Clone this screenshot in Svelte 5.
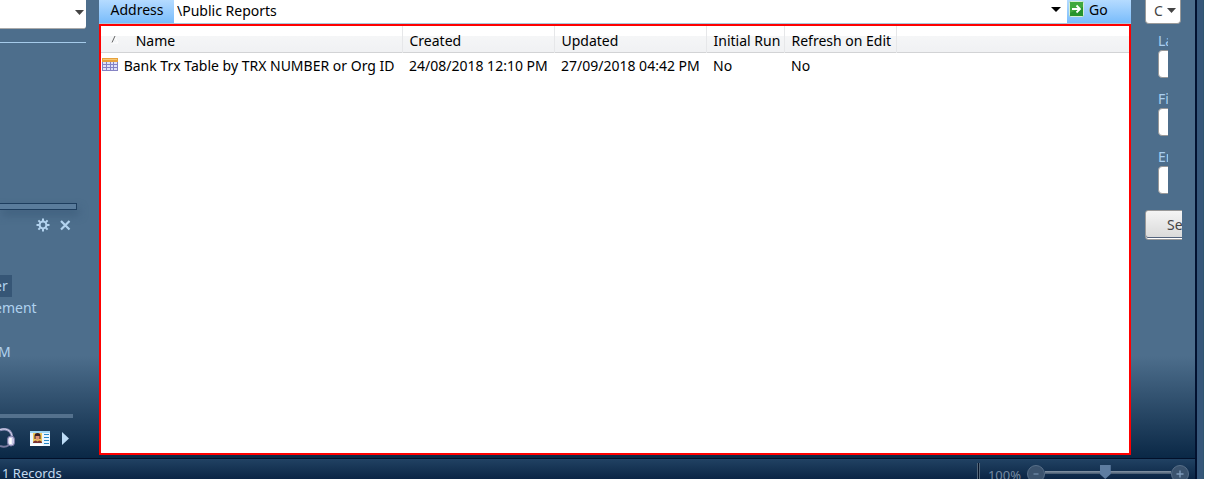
<script>
  const reports = [
    {
      name: 'Bank Trx Table by TRX NUMBER or Org ID',
      created: '24/08/2018 12:10 PM',
      updated: '27/09/2018 04:42 PM',
      initialRun: 'No',
      refreshOnEdit: 'No'
    }
  ];
  const fields = [
    { id: 'last', label: 'La' },
    { id: 'first', label: 'Fi' },
    { id: 'email', label: 'En' }
  ];
  let zoom = $state(100);
</script>

<div class="window">
  <div class="workspace">
    <aside class="nav">
      <div class="picker">
        <select aria-label="View"><option></option></select>
        <svg class="arrow" width="10" height="6" viewBox="0 0 10 6"><path d="M0 0h9L4.500 5z" fill="#444" /></svg>
      </div>
      <div class="rule"></div>
      <div class="splitter"></div>
      <div class="tools">
        <button aria-label="Settings">
          <svg width="14" height="14" viewBox="0 0 14 14" fill="none" stroke="#b3d3ef">
            <circle cx="7" cy="7" r="3.400" stroke-width="2" />
            <path d="M7 .5v2.500M7 11v2.500M.5 7H3M11 7h2.500M2.400 2.400l1.800 1.800M9.800 9.800l1.800 1.800M11.600 2.400L9.800 4.200M4.200 9.800l-1.800 1.800" stroke-width="2" />
          </svg>
        </button>
        <button aria-label="Close">
          <svg width="11" height="11" viewBox="0 0 11 11"><path d="M1 1l8.500 8.500M9.500 1L1 9.500" stroke="#b3d3ef" stroke-width="2.200" /></svg>
        </button>
      </div>
      <nav class="links">
        <a class="current" href="#er">er</a>
        <a href="#ement">ement</a>
        <a class="apart" href="#m">M</a>
      </nav>
      <div class="bar"></div>
      <div class="shortcuts">
        <button aria-label="Support">
          <svg width="15" height="20" viewBox="0 0 15 20" fill="none">
            <path d="M0 2C9-1 13 5 12 12" stroke="#8d90b8" stroke-width="2.500" />
            <path d="M0 1.500C8-.5 12 4 12 9" stroke="#d4d3ea" />
            <rect x="7.500" y="8" width="7" height="10" rx="3.500" fill="#c9c8e6" stroke="#7775a0" />
            <path d="M10.500 10v6" stroke="#fff" stroke-width="2.500" />
            <path d="M9 17q-4 3-9 1" stroke="#77799e" stroke-width="2" />
          </svg>
        </button>
        <button aria-label="Contacts">
          <svg width="20" height="15" viewBox="0 0 20 15">
            <rect width="20" height="15" fill="#e9f6ff" />
            <path d="M0 0h20v2H0z" fill="#9ed6f5" />
            <path d="M3 2h9v10H3z" fill="#efc85c" />
            <path d="M4.500 5q0-3 3-3t3 3v3h-6z" fill="#3c1f24" />
            <path d="M5.500 5h4v2.500l-2 2-2-2z" fill="#dd9176" />
            <path d="M3 12q0-2.500 3-2.500l1.500 1L9 9.500q3 0 3 2.500z" fill="#7d3434" />
            <path d="M14 3.500h5M14 6.500h5M14 9.500h5M14 12.500h5" stroke="#2688c6" />
            <path d="M0 13h13v2H0z" fill="#fff" />
          </svg>
        </button>
        <button aria-label="More">
          <svg width="7" height="13" viewBox="0 0 7 13"><path d="M0 0l7 6.500L0 13z" fill="#bddcf6" /></svg>
        </button>
      </div>
    </aside>

    <main>
      <div class="address">
        <label for="address">Address</label>
        <div class="path">
          <select id="address"><option>\Public Reports</option></select>
          <svg class="arrow" width="10" height="6" viewBox="0 0 10 6"><path d="M0 0h10L5 5z" fill="#000" /></svg>
        </div>
        <button class="go">
          <svg width="15" height="16" viewBox="0 0 15 16">
            <rect x=".5" y=".5" width="14" height="15" rx="1" fill="#26942c" stroke="#d4eed3" />
            <path d="M1 1h13v5L1 12z" fill="#50b54b" opacity=".6" />
            <path d="M3 8h8M7.500 4.500L11 8l-3.500 3.500" fill="none" stroke="#fff" stroke-width="1.800" />
          </svg>
          <span>Go</span>
        </button>
      </div>
      <div class="list">
        <table>
          <colgroup>
            <col class="c-name" /><col class="c-date" /><col class="c-date" /><col class="c-run" /><col class="c-edit" /><col />
          </colgroup>
          <thead>
            <tr>
              <th class="name">
                <svg width="10" height="9" viewBox="0 0 10 9"><path d="M4.500 1L8 8H1" fill="none" stroke="#fff" /><path d="M2 7.500L5 1" stroke="#666" /></svg>
                <span>Name</span>
              </th>
              <th>Created</th>
              <th>Updated</th>
              <th>Initial Run</th>
              <th>Refresh on Edit</th>
              <td></td>
            </tr>
          </thead>
          <tbody>
            {#each reports as r}
              <tr>
                <td class="name">
                  <svg width="16" height="14" viewBox="0 0 16 14">
                    <rect width="16" height="13" fill="#8583c4" />
                    <path d="M0 0h16v4H0z" fill="#e7a13b" />
                    <path d="M1 1h14v1H1z" fill="#f5c774" />
                    <path d="M1 4h3v2H1zM5 4h3v2H5zM9 4h2v2H9zM12 4h3v2h-3zM1 7h3v2H1zM5 7h3v2H5zM9 7h2v2H9zM12 7h3v2h-3zM1 10h3v2H1zM5 10h3v2H5zM9 10h2v2H9zM12 10h3v2h-3z" fill="#dfe1fa" />
                  </svg>
                  <span>{r.name}</span>
                </td>
                <td>{r.created}</td>
                <td>{r.updated}</td>
                <td>{r.initialRun}</td>
                <td>{r.refreshOnEdit}</td>
                <td></td>
              </tr>
            {/each}
          </tbody>
        </table>
      </div>
    </main>

    <aside class="search">
      <div class="kind">
        <select aria-label="Record type"><option>C</option></select>
        <svg class="arrow" width="10" height="6" viewBox="0 0 10 6"><path d="M0 0h9L4.500 5z" fill="#444" /></svg>
      </div>
      <form>
        {#each fields as f}
          <div class="field">
            <label for={f.id}>{f.label}</label>
            <input id={f.id} type="text" />
          </div>
        {/each}
        <button type="button">Se</button>
      </form>
    </aside>
  </div>

  <footer>
    <span>1 Records</span>
    <div class="zoom">
      <i class="grip"></i>
      <label for="zoom">{zoom}%</label>
      <button aria-label="Zoom out" onclick={() => (zoom = Math.max(0, zoom - 10))}>
        <svg width="18" height="18" viewBox="0 0 18 18"><circle cx="9" cy="9" r="8.500" fill="#3b536e" stroke="#586f88" /><path d="M6.500 9h5" stroke="#7f9bb9" /></svg>
      </button>
      <input id="zoom" type="range" min="0" max="210" bind:value={zoom} />
      <button aria-label="Zoom in" onclick={() => (zoom = Math.min(210, zoom + 10))}>
        <svg width="18" height="18" viewBox="0 0 18 18"><circle cx="9" cy="9" r="8.500" fill="#3b536e" stroke="#586f88" /><path d="M5.500 9h7M9 5.500v7" stroke="#7f9bb9" stroke-width="1.400" /></svg>
      </button>
    </div>
  </footer>
</div>

<style>
  :global(body) {
    background: #fff;
    font: 14px/22px 'Noto Sans', 'Open Sans', sans-serif;
    overflow: hidden;
  }
  * {
    box-sizing: border-box;
  }
  button,
  select,
  input {
    font: inherit;
    margin: 0;
    padding: 0;
    border: 0;
    background: none;
  }
  select {
    appearance: none;
    width: 100%;
    height: 100%;
  }
  svg {
    display: block;
    flex: none;
  }
  .window {
    display: flex;
    flex-direction: column;
    height: 100vh;
    margin-right: 26px;
    border-right: 1px solid #2f5670;
    box-shadow: inset -9px 0 #36577a;
    padding-right: 6px;
  }
  .workspace {
    display: flex;
    flex: 1;
    min-height: 0;
    border-right: 2px solid #02112f;
    background: linear-gradient(#4d6e8c 0, #4d6e8c calc(100% - 102px), #0a2846 100%);
  }
  .picker,
  .path,
  .kind {
    position: relative;
    background: #fff;
  }
  .arrow {
    position: absolute;
    pointer-events: none;
  }
  .nav {
    display: flex;
    flex-direction: column;
    flex: none;
    width: 99px;
    overflow: hidden;
  }
  .picker {
    width: 86px;
    height: 29px;
    border-radius: 0 0 3px 0;
    border-bottom: 1px solid #aaa;
  }
  .picker .arrow {
    right: 1px;
    top: 10px;
  }
  .rule {
    width: 86px;
    height: 1px;
    margin-top: 13px;
    background: #a6cbea;
  }
  .splitter {
    width: 77px;
    height: 7px;
    margin-top: 160px;
    border: 1px solid #1d3d5e;
    border-left: 0;
    background: #5a7c9c;
    box-shadow: 2px 5px 8px #3f5f7d;
    flex: none;
  }
  .tools {
    display: flex;
    align-items: center;
    gap: 10px;
    padding: 8px 0 0 36px;
  }
  .links {
    display: flex;
    flex-direction: column;
    align-items: flex-start;
    margin: 43px 0 0 -6px;
  }
  .links a {
    color: #b0d2ef;
    text-decoration: none;
  }
  .links .current {
    background: #365676;
    padding-right: 4px;
  }
  .links .apart {
    margin-top: 22px;
    padding-left: 4px;
  }
  .bar {
    width: 73px;
    height: 4px;
    margin-top: auto;
    background: #54718d;
    flex: none;
  }
  .shortcuts {
    display: flex;
    align-items: center;
    gap: 12px;
    margin: 10px 0;
  }
  .shortcuts button:first-child {
    margin-right: 3px;
  }
  main {
    display: flex;
    flex-direction: column;
    flex: 1;
    min-width: 0;
    padding-bottom: 3px;
  }
  .address {
    display: flex;
    flex: none;
    height: 24px;
    padding: 0 1px;
    background: linear-gradient(#b5dbff, #79bcfb);
    border-bottom: 1px solid #a8c8dc;
  }
  .address label {
    width: 74px;
    line-height: 20px;
    text-align: center;
  }
  .path {
    flex: 1;
    height: 23px;
  }
  .path select {
    padding: 0 3px 4px;
    line-height: 18px;
    color: #000;
  }
  .path .arrow {
    right: 6px;
    top: 7px;
  }
  .go {
    display: flex;
    gap: 5px;
    width: 63px;
    padding: 1px 0 0 2px;
    line-height: 18px;
    color: #000;
  }
  .list {
    flex: 1;
    min-height: 0;
    border: 2px solid #f00;
    background: #fff;
    overflow: hidden;
  }
  table {
    width: 100%;
    table-layout: fixed;
    border-collapse: collapse;
    white-space: nowrap;
  }
  .c-name {
    width: 301px;
  }
  .c-date {
    width: 152px;
  }
  .c-run {
    width: 78px;
  }
  .c-edit {
    width: 112px;
  }
  th,
  td {
    padding: 0 0 0 7px;
    font-weight: 400;
    text-align: left;
  }
  thead tr {
    height: 26px;
    background: linear-gradient(#fff 10px, #f5f6f7 10px, #f0f1f3);
    border-bottom: 1px solid #d2d3d5;
  }
  th {
    padding-top: 4px;
    border-right: 1px solid #e6e7e9;
  }
  tbody td {
    height: 26px;
  }
  .name {
    padding-left: 1px;
  }
  .name span {
    margin-left: 2px;
  }
  .name svg {
    display: inline-block;
    vertical-align: -1px;
  }
  th.name {
    padding-left: 9px;
  }
  th.name span {
    margin-left: 12px;
  }
  th.name svg {
    vertical-align: 2px;
  }
  .search {
    flex: none;
    width: 64px;
    padding-left: 14px;
    overflow: hidden;
  }
  .kind {
    width: 36px;
    height: 24px;
    border: 1px solid #9a9a9a;
    border-top: 0;
    border-radius: 0 0 4px 4px;
  }
  .kind select {
    padding: 0 0 4px 8px;
    line-height: 18px;
    color: #444;
  }
  .kind .arrow {
    right: 3px;
    top: 8px;
  }
  form {
    width: 37px;
    padding-top: 6px;
    overflow: hidden;
  }
  .field {
    width: 23px;
    height: 58px;
    padding-left: 13px;
    overflow: hidden;
  }
  .field label {
    display: block;
    height: 20px;
    color: #a9cff0;
  }
  .field input {
    width: 40px;
    height: 28px;
    border: 1px solid #999;
    border-radius: 4px;
    background: #fff;
  }
  form button {
    width: 80px;
    height: 30px;
    margin-top: 6px;
    padding-left: 21px;
    border: 1px solid #999;
    border-radius: 3px;
    background: linear-gradient(#f5f5f5, #d8d8d8);
    box-shadow: inset 0 -1px #fff, inset 0 -2px #53637d;
    color: #444;
    text-align: left;
  }
  footer {
    display: flex;
    justify-content: space-between;
    flex: none;
    height: 21px;
    padding: 4px 6px 0 2px;
    border-top: 1px solid #02102a;
    border-right: 2px solid #02112f;
    background: linear-gradient(#214263, #0b2545);
    color: #c3d9ee;
    font-size: 13px;
    line-height: 20px;
    overflow: hidden;
  }
  .zoom {
    display: flex;
    align-items: flex-start;
  }
  .zoom button {
    margin-top: 2px;
  }
  .zoom label {
    margin: 2px 6px 0 8px;
    color: #758aa1;
  }
  .grip {
    width: 3px;
    height: 22px;
    background: linear-gradient(90deg, #53677b 33%, #06142a 33% 66%, #53677b 66%);
  }
  .zoom input {
    appearance: none;
    width: 126px;
    height: 18px;
    background: linear-gradient(#8797a8, #43566d) center / 100% 3px no-repeat;
  }
  .zoom input::-webkit-slider-thumb {
    appearance: none;
    width: 11px;
    height: 14px;
    background: #5e7da1;
    clip-path: polygon(0 0, 100% 0, 100% 65%, 50% 100%, 0 65%);
  }
</style>
